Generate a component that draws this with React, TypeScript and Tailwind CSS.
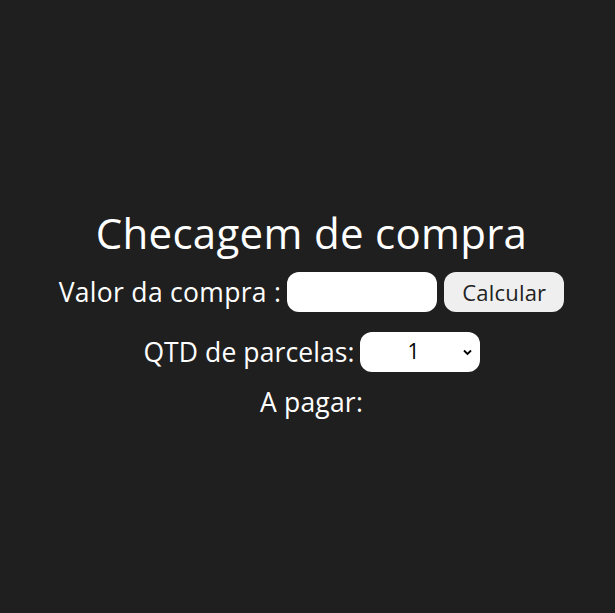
import React from "react";

export default function App() {
  const font = { fontFamily: '"Open Sans", "Liberation Sans", sans-serif' };
  return (
    <div className="w-full h-[613px] bg-[#1f1f1f] text-white flex flex-col items-center pt-[207px] pl-[8px]" style={font}>
      <h1 className="text-[42px] leading-[52px] font-medium tracking-[0.3px]">Checagem de compra</h1>
      <div className="mt-[13px] flex items-center">
        <span className="text-[26.5px] leading-[40px] mr-[6px] tracking-[0.3px]">Valor da compra :</span>
        <input className="w-[150px] h-[40px] rounded-[12px] bg-white text-black px-3 outline-none" />
        <button className="ml-[7px] w-[120px] h-[40px] rounded-[12px] bg-[#efefef] text-[#222] text-[22px] tracking-[0.2px]">Calcular</button>
      </div>
      <div className="mt-[20px] flex items-center">
        <span className="text-[26.5px] leading-[40px] mr-[5px] tracking-[0.1px]">QTD de parcelas:</span>
        <div className="relative w-[120px] h-[40px] rounded-[12px] bg-white text-black flex items-center justify-center">
          <span className="text-[21px] ml-[-12px]">1</span>
          <svg className="absolute right-[8px] top-[17px]" width="9" height="7" viewBox="0 0 9 7">
            <path d="M1 1.5 L4.5 5 L8 1.5" stroke="#000" strokeWidth="1.8" fill="none" />
          </svg>
        </div>
      </div>
      <div className="mt-[10px] text-[26.5px] leading-[40px] tracking-[0.2px]">A pagar:</div>
    </div>
  );
}
